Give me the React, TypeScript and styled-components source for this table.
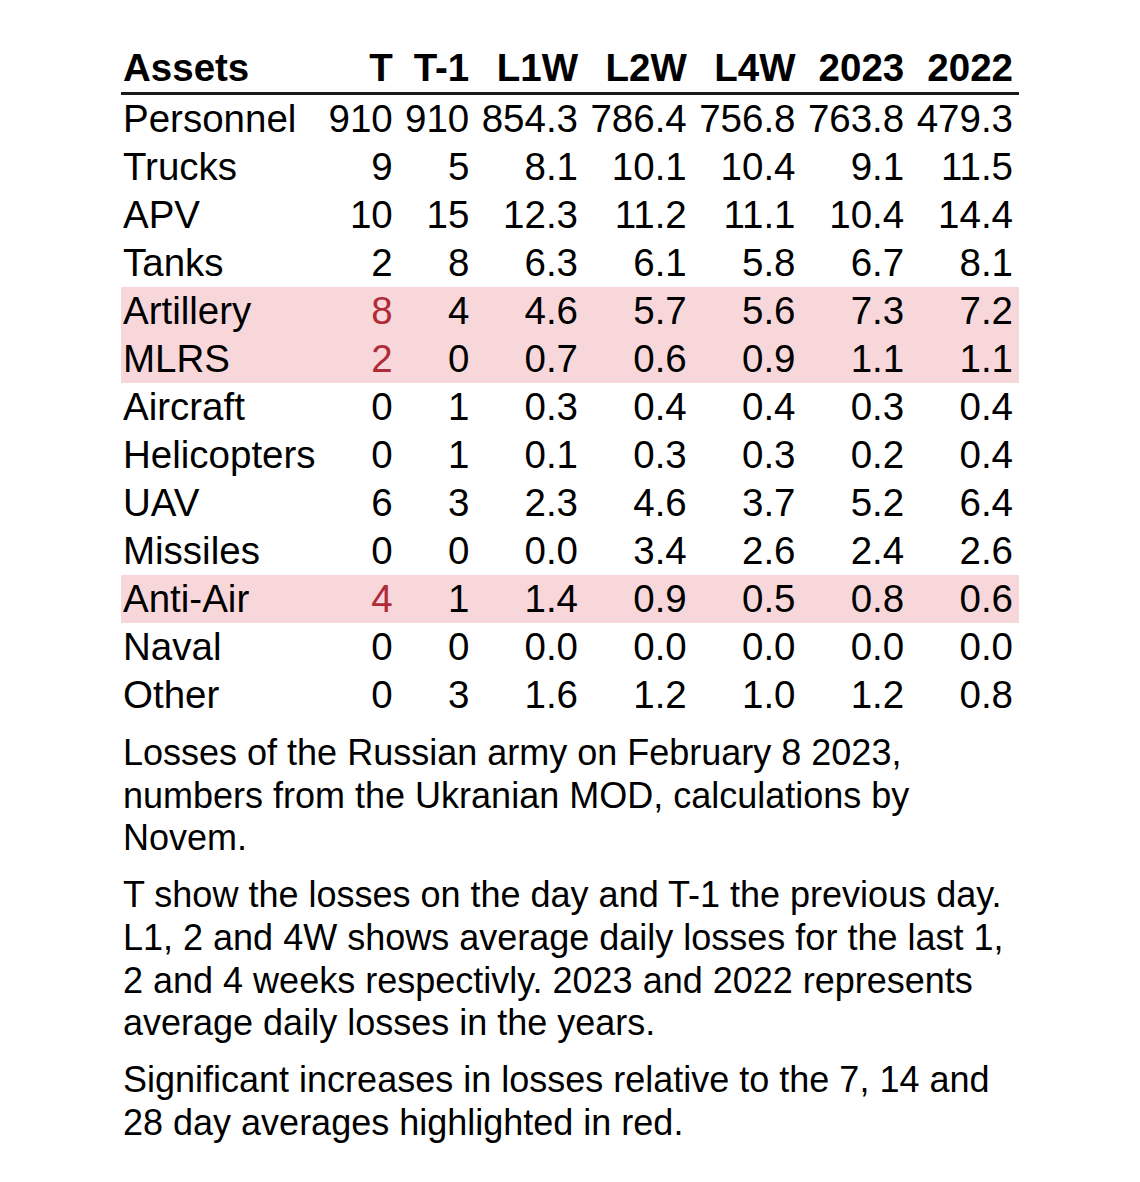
import React from "react";
import styled, { createGlobalStyle } from "styled-components";

const GlobalStyle = createGlobalStyle`
  html, body {
    margin: 0;
    padding: 0;
    background: #ffffff;
  }
  body {
    font-family: "Liberation Sans", Arial, sans-serif;
    color: #000000;
  }
`;

const Page = styled.div`
  display: flex;
  justify-content: center;
  padding: 44px 0 40px;
`;

const Figure = styled.figure`
  margin: 0;
  width: 898px;
`;

const Table = styled.table`
  width: 100%;
  border-collapse: collapse;
  font-size: 38.5px;
  line-height: 48px;
`;

const HeadCell = styled.th<{ $first?: boolean }>`
  font-weight: 700;
  text-align: ${(p) => (p.$first ? "left" : "right")};
  padding: 0 6px;
  padding-left: ${(p) => (p.$first ? "2px" : "6px")};
  border-bottom: 3px solid #1a1a1a;
  white-space: nowrap;
`;

const Row = styled.tr<{ $flag?: boolean }>`
  background: ${(p) => (p.$flag ? "#f8d7da" : "transparent")};
`;

const Cell = styled.td<{ $first?: boolean; $alert?: boolean }>`
  text-align: ${(p) => (p.$first ? "left" : "right")};
  padding: 0 6px;
  padding-left: ${(p) => (p.$first ? "2px" : "6px")};
  color: ${(p) => (p.$alert ? "#b02a37" : "#000000")};
  white-space: nowrap;
`;

const Caption = styled.p`
  margin: 14px 0 0;
  padding-left: 2px;
  font-size: 36px;
  line-height: 42.7px;

  &:first-of-type {
    margin-top: 13px;
  }
`;

type Asset = {
  name: string;
  values: string[];
  flag?: boolean;
};

const columns = ["T", "T-1", "L1W", "L2W", "L4W", "2023", "2022"];

const assets: Asset[] = [
  { name: "Personnel", values: ["910", "910", "854.3", "786.4", "756.8", "763.8", "479.3"] },
  { name: "Trucks", values: ["9", "5", "8.1", "10.1", "10.4", "9.1", "11.5"] },
  { name: "APV", values: ["10", "15", "12.3", "11.2", "11.1", "10.4", "14.4"] },
  { name: "Tanks", values: ["2", "8", "6.3", "6.1", "5.8", "6.7", "8.1"] },
  { name: "Artillery", values: ["8", "4", "4.6", "5.7", "5.6", "7.3", "7.2"], flag: true },
  { name: "MLRS", values: ["2", "0", "0.7", "0.6", "0.9", "1.1", "1.1"], flag: true },
  { name: "Aircraft", values: ["0", "1", "0.3", "0.4", "0.4", "0.3", "0.4"] },
  { name: "Helicopters", values: ["0", "1", "0.1", "0.3", "0.3", "0.2", "0.4"] },
  { name: "UAV", values: ["6", "3", "2.3", "4.6", "3.7", "5.2", "6.4"] },
  { name: "Missiles", values: ["0", "0", "0.0", "3.4", "2.6", "2.4", "2.6"] },
  { name: "Anti-Air", values: ["4", "1", "1.4", "0.9", "0.5", "0.8", "0.6"], flag: true },
  { name: "Naval", values: ["0", "0", "0.0", "0.0", "0.0", "0.0", "0.0"] },
  { name: "Other", values: ["0", "3", "1.6", "1.2", "1.0", "1.2", "0.8"] },
];

const App = () => {
  return (
    <>
      <GlobalStyle />
      <Page>
        <Figure>
          <Table>
            <thead>
              <tr>
                <HeadCell $first>Assets</HeadCell>
                {columns.map((c) => (
                  <HeadCell key={c}>{c}</HeadCell>
                ))}
              </tr>
            </thead>
            <tbody>
              {assets.map((a) => (
                <Row key={a.name} $flag={a.flag}>
                  <Cell $first>{a.name}</Cell>
                  {a.values.map((v, i) => (
                    <Cell key={i} $alert={a.flag && i === 0}>
                      {v}
                    </Cell>
                  ))}
                </Row>
              ))}
            </tbody>
          </Table>
          <Caption>
            Losses of the Russian army on February 8 2023, numbers from the
            Ukranian MOD, calculations by Novem.
          </Caption>
          <Caption>
            T show the losses on the day and T-1 the previous day. L1, 2 and 4W
            shows average daily losses for the last 1, 2 and 4 weeks
            respectivly. 2023 and 2022 represents average daily losses in the
            years.
          </Caption>
          <Caption>
            Significant increases in losses relative to the 7, 14 and 28 day
            averages highlighted in red.
          </Caption>
        </Figure>
      </Page>
    </>
  );
};

export default App;
